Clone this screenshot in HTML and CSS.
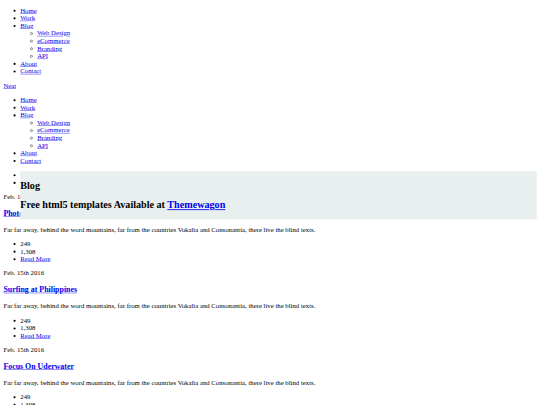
FILE: index.html
```html
<!DOCTYPE html>
<html>
<head>
	<meta charset="utf-8">
	<meta name="viewport" content="width=device-width, initial-scale=1">
	<title>Neat - Blog</title>
	<link rel="stylesheet" href="styles.css">
</head>
<body>
<div class="page">

	<ul class="menu">
		<li><a href="#">Home</a></li>
		<li><a href="#">Work</a></li>
		<li><a href="#">Blog</a>
			<ul>
				<li><a href="#">Web Design</a></li>
				<li><a href="#">eCommerce</a></li>
				<li><a href="#">Branding</a></li>
				<li><a href="#">API</a></li>
			</ul>
		</li>
		<li><a href="#">About</a></li>
		<li><a href="#">Contact</a></li>
	</ul>

	<p class="logo"><a href="#">Neat</a></p>

	<ul class="menu">
		<li><a href="#">Home</a></li>
		<li><a href="#">Work</a></li>
		<li><a href="#">Blog</a>
			<ul>
				<li><a href="#">Web Design</a></li>
				<li><a href="#">eCommerce</a></li>
				<li><a href="#">Branding</a></li>
				<li><a href="#">API</a></li>
			</ul>
		</li>
		<li><a href="#">About</a></li>
		<li><a href="#">Contact</a></li>
	</ul>

	<ul class="social">
		<li class="holder">&nbsp;
			<div class="banner">
				<h2>Blog</h2>
				<h2>Free html5 templates Available at <a href="#">Themewagon</a></h2>
			</div>
		</li>
		<li>&nbsp;</li>
	</ul>

	<div class="post">
		<p class="date">Feb. 15th 2016</p>
		<h3><a href="#">Photography Trip</a></h3>
		<p>Far far away, behind the word mountains, far from the countries Vokalia and Consonantia, there live the blind texts.</p>
		<ul>
			<li>249</li>
			<li>1,308</li>
			<li><a href="#">Read More</a></li>
		</ul>
	</div>

	<div class="post">
		<p class="date">Feb. 15th 2016</p>
		<h3><a href="#">Surfing at Philippines</a></h3>
		<p>Far far away, behind the word mountains, far from the countries Vokalia and Consonantia, there live the blind texts.</p>
		<ul>
			<li>249</li>
			<li>1,308</li>
			<li><a href="#">Read More</a></li>
		</ul>
	</div>

	<div class="post">
		<p class="date">Feb. 15th 2016</p>
		<h3><a href="#">Focus On Uderwater</a></h3>
		<p>Far far away, behind the word mountains, far from the countries Vokalia and Consonantia, there live the blind texts.</p>
		<ul>
			<li>249</li>
			<li>1,308</li>
			<li><a href="#">Read More</a></li>
		</ul>
	</div>

</div>
</body>
</html>
```

FILE: styles.css
```css
body{
	margin: 0;
	overflow: hidden;
	font-family: "Liberation Serif", "Times New Roman", serif;
	font-size: 16px;
	color: #000;
}
.page{
	width: 1264px;
	padding: 8px;
	transform: scale(0.421875);
	transform-origin: 0 0;
}
.menu:first-child{
	margin-top: 8px;
}
a{
	color: #0000ee;
}
.holder{
	position: relative;
}
.banner{
	position: absolute;
	top: 0;
	left: 0;
	right: 0;
	background: #e8efee;
	overflow: hidden;
}
```
